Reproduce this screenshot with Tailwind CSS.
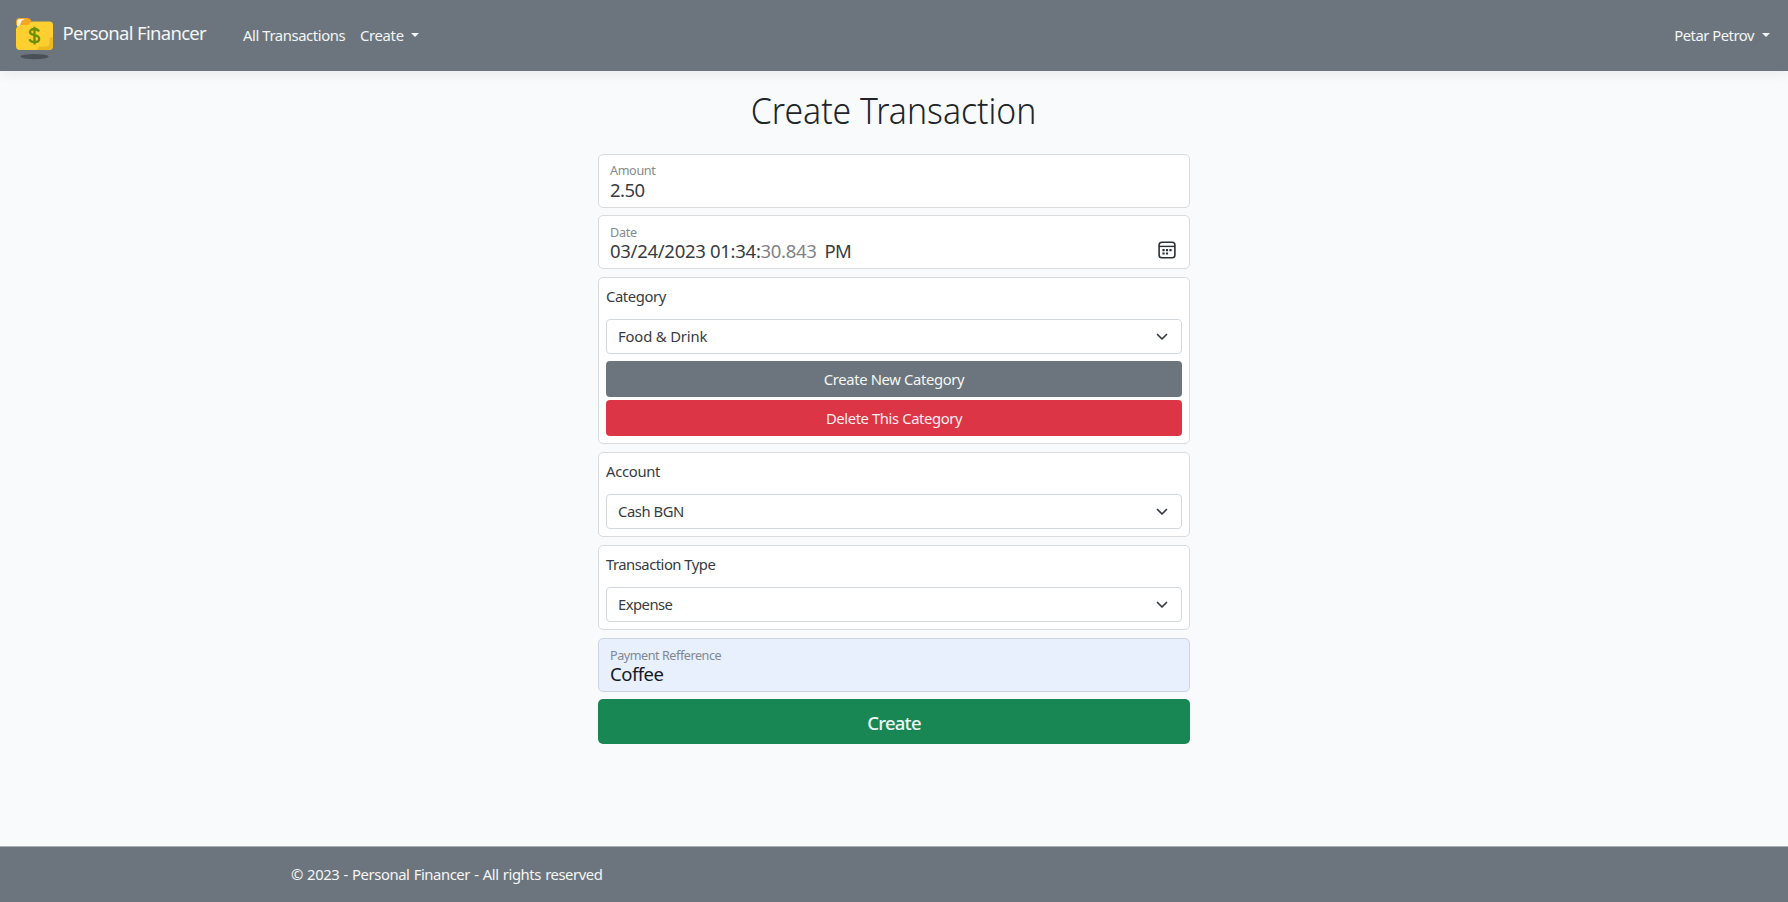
<!DOCTYPE html>
<html lang="en">
<head>
<meta charset="utf-8">
<title>Create Transaction - Personal Financer</title>
<script src="https://cdn.jsdelivr.net/npm/@tailwindcss/browser@4"></script>
</head>
<body class="flex h-[902px] w-[1788px] flex-col overflow-hidden bg-[#f8fafc] font-['Noto_Sans',sans-serif] text-[14.8px] leading-[22px] whitespace-nowrap text-[#373c41]">

<header class="flex h-[71px] shrink-0 items-center bg-[#6c757d] pr-[18px] pl-4 text-[#f4f5f6] shadow-[0_4px_11px_rgba(0,0,0,0.06)]">
  <a class="flex w-[227px] items-center">
    <svg class="mt-[6px] h-[43px] w-[37px] shrink-0" viewBox="0 0 37 43">
      <ellipse cx="18.5" cy="39.6" rx="14" ry="2.6" fill="#495057"/>
      <path d="M0 5Q0 1 4 1H11.500Q14 1 15.500 4L17 8H0Z" fill="#f5a623"/>
      <path d="M1 9V5Q1 2 4.500 2H9Q4 3.500 4 10Z" fill="#fff3dc"/>
      <path d="M0 12Q1 8 6 8H12Q15 4.500 17 4.500H33.500Q37 4.500 37 8V29Q37 33 33 33H4Q0 33 0 29Z" fill="#fdd02f"/>
      <path d="M37 20L33.500 21V26Q33 29.500 29 29.500H23L20.500 33H33Q37 33 37 29Z" fill="#ecb920"/>
      <path d="M23 14.500C22 12.600 20.300 12 18.400 12C15.800 12 14 13.200 14 15.100C14 17.200 16 17.700 18.500 18.200C21.200 18.800 23.200 19.500 23.200 21.800C23.200 24 21.200 25.200 18.600 25.200C16.100 25.200 14.300 24.200 13.400 22.300M18.500 9.800V27.600" fill="none" stroke="#6a8f00" stroke-width="2.300"/>
    </svg>
    <span class="-mt-[5px] ml-[9.5px] text-[18.5px] leading-7 tracking-[-0.69px]">Personal Financer</span>
  </a>
  <nav class="flex flex-1 items-center pb-[2px]">
    <a class="w-[117px] tracking-[-0.4px]">All Transactions</a>
    <a class="flex items-center tracking-[-0.3px]">Create
      <i class="ml-[7px] block border-x-4 border-t-4 border-x-transparent border-t-[#f4f5f6]"></i></a>
    <a class="ml-auto flex items-center tracking-[-0.48px]">Petar Petrov
      <i class="ml-[8px] block border-x-4 border-t-4 border-x-transparent border-t-[#f4f5f6]"></i></a>
  </nav>
</header>

<main class="mx-auto flex w-[592px] flex-1 flex-col gap-2 pt-[17px]">
  <h1 class="mb-[14px] flex h-11 justify-center text-[37px] leading-[44px] font-light text-[#212529]"><span class="scale-x-[0.912]">Create Transaction</span></h1>

  <div class="-mb-px h-[54px] rounded-[5px] border border-[#d8dcdf] bg-white px-[11px] pt-[9px]">
    <label class="block text-[12.6px] leading-[14px] tracking-[-0.35px] text-[#868a8e]">Amount</label>
    <div class="text-[18.5px] leading-[23px] tracking-[-0.5px]">2.50</div>
  </div>

  <div class="flex h-[54px] items-start justify-between rounded-[5px] border border-[#d8dcdf] bg-white pt-[10px] pr-[13px] pl-[11px]">
    <div>
      <label class="block text-[12.6px] leading-[14px] tracking-[-0.3px] text-[#868a8e]">Date</label>
      <div class="text-[18.5px] leading-[21px] tracking-[-0.29px]">03/24/2023 01:34:<span class="tracking-[-0.33px] text-[#7f8386]">30.843</span><span class="ml-[8px] tracking-[-0.7px]">PM</span></div>
    </div>
    <svg class="mt-[15px] h-[18px] w-[18px]" viewBox="0 0 18 18" fill="none" stroke="#2b3035">
      <rect x="1.100" y="1.300" width="15.800" height="15.400" rx="2.800" stroke-width="1.600"/>
      <path d="M1 5.400H17" stroke-width="1.400"/>
      <path d="M4.400 9.100H6.600M7.900 9.100H10.100M11.400 9.100H13.600M4.400 12.500H6.600M7.900 12.500H10.100" stroke-width="2.100"/>
    </svg>
  </div>

  <div class="flex h-[167px] flex-col rounded-[5px] border border-[#d8dcdf] bg-white px-[7px] pt-[7px]">
    <label class="mb-[12px] tracking-[-0.4px]">Category</label>
    <div class="mb-[7px] flex h-[35px] items-center justify-between rounded-[4px] border border-[#d3d8dd] pr-[13px] pl-[11px]">
      <span class="-mt-[2px] tracking-[-0.15px]">Food &amp; Drink</span>
      <svg class="h-3 w-3" viewBox="0 0 12 12" fill="none" stroke="#343a40" stroke-width="1.700" stroke-linecap="round" stroke-linejoin="round"><path d="M1.500 3.500L6 8L10.500 3.500"/></svg>
    </div>
    <button class="mb-[3px] h-9 rounded-[4px] bg-[#6c757d] pb-px tracking-[-0.36px] text-[#f4f5f6]">Create New Category</button>
    <button class="h-9 rounded-[4px] bg-[#dc3545] pb-px tracking-[-0.39px] text-[#fdeef0]">Delete This Category</button>
  </div>

  <div class="flex h-[85px] flex-col rounded-[5px] border border-[#d8dcdf] bg-white px-[7px] pt-[7px]">
    <label class="mb-[12px] tracking-[-0.3px]">Account</label>
    <div class="flex h-[35px] items-center justify-between rounded-[4px] border border-[#d3d8dd] pr-[13px] pl-[11px]">
      <span class="-mt-[2px] tracking-[-0.45px]">Cash BGN</span>
      <svg class="h-3 w-3" viewBox="0 0 12 12" fill="none" stroke="#343a40" stroke-width="1.700" stroke-linecap="round" stroke-linejoin="round"><path d="M1.500 3.500L6 8L10.500 3.500"/></svg>
    </div>
  </div>

  <div class="flex h-[85px] flex-col rounded-[5px] border border-[#d8dcdf] bg-white px-[7px] pt-[7px]">
    <label class="mb-[12px] tracking-[-0.5px]">Transaction Type</label>
    <div class="flex h-[35px] items-center justify-between rounded-[4px] border border-[#d3d8dd] pr-[13px] pl-[11px]">
      <span class="-mt-px tracking-[-0.52px]">Expense</span>
      <svg class="h-3 w-3" viewBox="0 0 12 12" fill="none" stroke="#343a40" stroke-width="1.700" stroke-linecap="round" stroke-linejoin="round"><path d="M1.500 3.500L6 8L10.500 3.500"/></svg>
    </div>
  </div>

  <div class="h-[54px] rounded-[5px] border border-[#cfd5df] bg-[#e8f0fe] px-[11px] pt-[10px]">
    <label class="block text-[12.6px] leading-[14px] tracking-[-0.45px] text-[#82878f]">Payment Refference</label>
    <div class="text-[18.5px] leading-[21px] tracking-[-0.5px] text-[#16181b]">Coffee</div>
  </div>

  <button class="-mt-px h-[45px] rounded-[5px] bg-[#198754] pt-[2px] text-[18.5px] font-medium tracking-[-0.75px] text-[#eefaf4]">Create</button>
</main>

<footer class="flex h-[56px] shrink-0 items-center border-t border-[#aab0b5] bg-[#6c757d] pb-px pl-[291px] text-[#f4f5f6]">
  <span class="tracking-[-0.42px] [word-spacing:0.8px]">© 2023 - Personal Financer - All rights reserved</span>
</footer>
</body>
</html>
